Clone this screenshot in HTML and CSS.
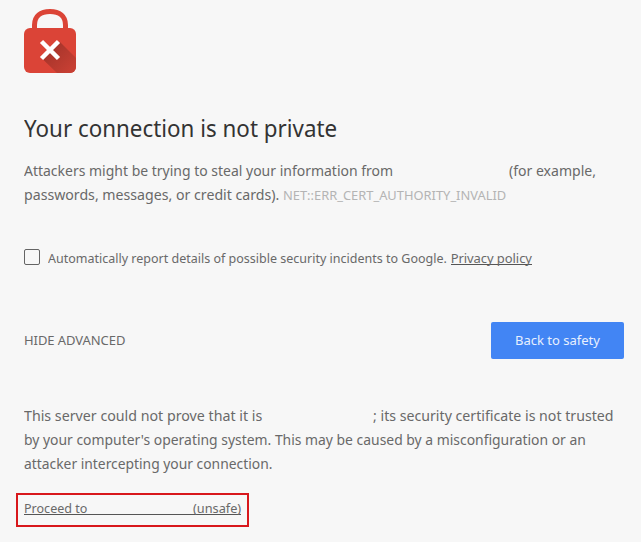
FILE: index.html
```html
<!DOCTYPE html>
<html lang="en">
<head>
<meta charset="utf-8">
<title>Privacy error</title>
<link rel="stylesheet" href="styles.css">
</head>
<body>
<main class="page">
  <svg class="lock" width="52" height="64" viewBox="0 0 52 64" aria-hidden="true">
    <defs>
      <linearGradient id="shade" gradientUnits="userSpaceOnUse" x1="26" y1="41" x2="46" y2="61">
        <stop offset="0" stop-color="#a8352b"/>
        <stop offset="1" stop-color="#c63f33"/>
      </linearGradient>
    </defs>
    <path d="M10.500 22V16c0-9 6-13.500 15.500-13.500S41.500 7 41.500 16v6" fill="none" stroke="#db4437" stroke-width="5"/>
    <rect y="19" width="52" height="45" rx="6" fill="#db4437"/>
    <path d="M35.500 32.500L52 49v9a6 6 0 0 1-6 6H33L18 49.500z" fill="url(#shade)"/>
    <path d="M17.500 32.500l17 17m0-17l-17 17" stroke="#fff" stroke-width="4.500"/>
  </svg>
  <h1 class="title"><span class="t0">Your connection is not private</span></h1>
  <p class="text">
    <span class="line"><span class="a1">Attackers might be trying to steal your information from</span><span class="host-a"></span><span class="a2">(for example,</span></span>
    <span class="line"><span class="a3">passwords, messages, or credit cards).</span> <span class="code">NET::ERR_CERT_AUTHORITY_INVALID</span></span>
  </p>
  <div class="report">
    <span class="box"></span>
    <span class="r1">Automatically report details of possible security incidents to Google.</span>
    <a class="link r2">Privacy policy</a>
  </div>
  <div class="actions">
    <span class="advanced">HIDE ADVANCED</span>
    <span class="button">Back to safety</span>
  </div>
  <p class="text details">
    <span class="line"><span class="d1">This server could not prove that it is</span><span class="host-b"></span><span class="d2">; its security certificate is not trusted</span></span>
    <span class="line d3">by your computer's operating system. This may be caused by a misconfiguration or an</span>
    <span class="line d4">attacker intercepting your connection.</span>
  </p>
  <div class="proceed"><a class="link"><span class="p1">Proceed to</span><span class="p2">(unsafe)</span></a></div>
</main>
</body>
</html>
```
FILE: styles.css
```css
* { box-sizing: border-box; }
body { margin: 0; background: #f7f7f7; color: #696969; font-family: "Noto Sans", sans-serif; }
.page { height: 542px; padding: 9px 17px 0 24px; overflow: hidden; white-space: nowrap; }
.lock { display: block; }
.title { margin: 37px 0 0; color: #333; font-size: 24px; font-weight: 400; line-height: 36px; }
.text { margin: 12px 0 0; font-size: 15px; line-height: 24px; }
.line { display: flex; width: max-content; }

/* Condensed text runs, each scaled from its left edge */
.t0, .a1, .a2, .a3, .code, .r1, .d1, .d2, .d3, .d4, .p1, .p2 { transform-origin: 0 50%; }
.t0 { display: inline-block; transform: scaleX(.932); }
.a1 { transform: scaleX(.932); }
.a2 { transform: scaleX(.936); }
.a3 { transform: scaleX(.943); }
.d1 { transform: scaleX(.948); }
.d2 { transform: scaleX(.944); }
.d3 { transform: scaleX(.927); }
.d4 { transform: scaleX(.923); }
.r1 { transform: scaleX(.962); }
.p1 { transform: scaleX(.965); }
.p2 { transform: scaleX(.98); transform-origin: 100% 50%; }

.host-a { width: 89px; }
.host-b { width: 98px; }
.code { margin: 1px 0 -1px -12px; color: #b4b4b4; font-size: 13px; transform: scaleX(.991); }
.report { display: flex; margin-top: 40px; height: 24px; align-items: center; font-size: 13px; }
.box { width: 16px; height: 16px; margin: -2px 8px 0 0; border: 1px solid #646464; border-radius: 2px; }
.link { border-bottom: 1px solid #555; }
.r2 { height: 14px; margin: -1px 0 0 -12px; line-height: 15px; letter-spacing: -.07px; }
.actions { display: flex; margin-top: 52px; height: 37px; align-items: center; justify-content: space-between; font-size: 13px; }
.advanced { margin-top: -2px; letter-spacing: -.07px; }
.button { width: 133px; height: 37px; border-radius: 2px; background: #4285f4; color: #e8f0fe; line-height: 37px; text-align: center; }
.details { margin-top: 44px; }
.proceed { display: flex; width: 233px; height: 34px; margin: 18px 0 0 -8px; padding: 6px; border: 2px solid #d8181c; font-size: 13px; }
.proceed .link { display: flex; justify-content: space-between; width: 217px; height: 14px; line-height: 15px; }
```
